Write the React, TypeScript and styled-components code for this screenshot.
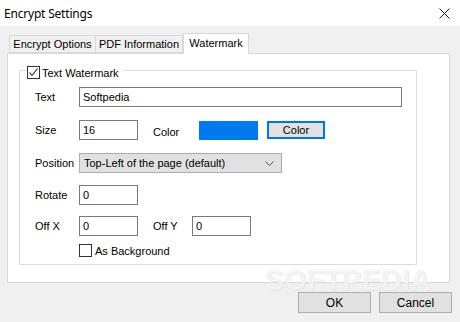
import React from "react";
import styled, { createGlobalStyle } from "styled-components";

const Global = createGlobalStyle`
  html, body { margin: 0; padding: 0; }
  body { width: 460px; height: 322px; overflow: hidden; background: #f0f0f0; }
  * { box-sizing: border-box; }
`;

const Dialog = styled.div`
  position: relative;
  width: 460px;
  height: 322px;
  display: flex;
  flex-direction: column;
  background: #f0f0f0;
  font-family: "Liberation Sans", Arial, sans-serif;
  font-size: 11px;
  color: #000;
`;

const TitleBar = styled.div`
  height: 26px;
  background: #fff;
  display: flex;
  align-items: center;
  justify-content: space-between;
  padding: 0 10px 0 4px;
`;

const Title = styled.span`
  font-family: "Noto Sans", "Open Sans", sans-serif;
  font-size: 12px;
  letter-spacing: -0.2px;
  color: #000;
`;

const Body = styled.div`
  flex: 1;
  display: flex;
  flex-direction: column;
  padding: 7px 10px 0 7px;
`;

const TabStrip = styled.div`
  display: flex;
  align-items: flex-end;
  height: 20px;
  padding-left: 2px;
`;

const Tab = styled.div<{ $active?: boolean; $first?: boolean; $w: number }>`
  height: ${(p) => (p.$active ? "21px" : "18px")};
  margin-bottom: ${(p) => (p.$active ? "-1px" : "0")};
  width: ${(p) => p.$w}px;
  border: 1px solid #d9d9d9;
  border-bottom: ${(p) => (p.$active ? "none" : "1px solid #d9d9d9")};
  border-left: ${(p) => (p.$first || p.$active ? "1px solid #d9d9d9" : "none")};
  background: ${(p) => (p.$active ? "#fff" : "#f0f0f0")};
  display: flex;
  align-items: center;
  justify-content: center;
  padding-bottom: ${(p) => (p.$active ? "3px" : "0")};
  position: relative;
  z-index: 1;
`;

const Panel = styled.div`
  height: 230px;
  background: #fff;
  border: 1px solid #d9d9d9;
  padding: 16px 0 0 11px;
`;

const Group = styled.div`
  position: relative;
  width: 398px;
  height: 195px;
  border: 1px solid #dcdcdc;
  padding: 0 0 0 15px;
  display: flex;
  flex-direction: column;
`;

const Legend = styled.label`
  position: absolute;
  top: -5px;
  left: 7px;
  background: #fff;
  display: flex;
  align-items: center;
  gap: 2px;
  padding-right: 4px;
  height: 13px;
`;

const CheckLine = styled.label`
  display: flex;
  align-items: center;
  gap: 3px;
  height: 13px;
`;

const Check = styled.span`
  width: 13px;
  height: 13px;
  border: 1px solid #333;
  background: #fff;
  display: inline-flex;
  align-items: center;
  justify-content: center;
`;

const Row = styled.div<{ $top: number; $h?: number }>`
  display: flex;
  align-items: center;
  margin-top: ${(p) => p.$top}px;
  height: ${(p) => p.$h ?? 20}px;
`;

const Label = styled.span<{ $w?: number; $dy?: number; $ml?: number }>`
  width: ${(p) => p.$w ?? 44}px;
  margin-left: ${(p) => p.$ml ?? 0}px;
  flex: none;
  position: relative;
  top: ${(p) => p.$dy ?? 0}px;
`;

const Input = styled.div<{ $w: number }>`
  width: ${(p) => p.$w}px;
  height: 20px;
  border: 1px solid #7a7a7a;
  background: #fff;
  padding: 0 3px;
  display: flex;
  align-items: center;
  flex: none;
`;

const Swatch = styled.div`
  width: 59px;
  height: 19px;
  background: #0078f0;
  flex: none;
`;

const ColorButton = styled.div`
  width: 58px;
  height: 18px;
  margin-left: 9px;
  border: 2px solid #0078d7;
  background: #e1e1e1;
  display: flex;
  align-items: center;
  justify-content: center;
  flex: none;
`;

const Select = styled.div`
  width: 203px;
  height: 20px;
  border: 1px solid #adadad;
  background: #e1e1e1;
  display: flex;
  align-items: center;
  justify-content: space-between;
  padding: 0 7px 0 4px;
  flex: none;
`;

const Footer = styled.div`
  display: flex;
  justify-content: flex-end;
  gap: 8px;
  margin-top: 9px;
  margin-right: -2px;
`;

const Button = styled.div`
  width: 73px;
  height: 21px;
  border: 1px solid #adadad;
  background: #e1e1e1;
  display: flex;
  align-items: center;
  justify-content: center;
  font-size: 12px;
`;

const Stamp = styled.div`
  position: absolute;
  left: 265px;
  top: 264px;
  font-family: "Liberation Sans", Arial, sans-serif;
  font-weight: bold;
  font-size: 29px;
  letter-spacing: 0px;
  color: rgba(255, 255, 255, 0.7);
  text-shadow: 0 0 1px rgba(190, 190, 190, 0.45), 1px 1px 0 rgba(215, 215, 215, 0.35);
  pointer-events: none;
`;

const CloseIcon = () => (
  <svg width="11" height="11" viewBox="0 0 11 11">
    <path d="M0.5 0.5 L10.5 10.5 M10.5 0.5 L0.5 10.5" stroke="#222" strokeWidth="1" fill="none" />
  </svg>
);

const Tick = () => (
  <svg width="11" height="11" viewBox="0 0 11 11">
    <path d="M1.5 5.5 L4 8.5 L9.5 1.5" stroke="#222" strokeWidth="1.1" fill="none" />
  </svg>
);

const Chevron = () => (
  <svg width="9" height="5" viewBox="0 0 9 5">
    <path d="M0.5 0.5 L4.5 4.5 L8.5 0.5" stroke="#555" strokeWidth="1" fill="none" />
  </svg>
);

export default function App() {
  return (
    <Dialog>
      <Global />
      <TitleBar>
        <Title>Encrypt Settings</Title>
        <CloseIcon />
      </TitleBar>
      <Body>
        <TabStrip>
          <Tab $w={87} $first>Encrypt Options</Tab>
          <Tab $w={87}>PDF Information</Tab>
          <Tab $w={66} $active>Watermark</Tab>
        </TabStrip>
        <Panel>
          <Group>
            <Legend>
              <Check><Tick /></Check>
              Text Watermark
            </Legend>
            <Row $top={16}>
              <Label>Text</Label>
              <Input $w={323}>Softpedia</Input>
            </Row>
            <Row $top={13}>
              <Label>Size</Label>
              <Input $w={59}>16</Input>
              <Label $w={46} $dy={2} $ml={15}>Color</Label>
              <Swatch />
              <ColorButton>Color</ColorButton>
            </Row>
            <Row $top={13}>
              <Label>Position</Label>
              <Select>
                <span>Top-Left of the page (default)</span>
                <Chevron />
              </Select>
            </Row>
            <Row $top={12}>
              <Label>Rotate</Label>
              <Input $w={59}>0</Input>
            </Row>
            <Row $top={11}>
              <Label>Off X</Label>
              <Input $w={59}>0</Input>
              <Label $w={39} $ml={15}>Off Y</Label>
              <Input $w={59}>0</Input>
            </Row>
            <Row $top={8} $h={13}>
              <Label />
              <CheckLine>
                <Check />
                As Background
              </CheckLine>
            </Row>
          </Group>
        </Panel>
        <Footer>
          <Button>OK</Button>
          <Button>Cancel</Button>
        </Footer>
      </Body>
      <Stamp>SOFTPEDIA</Stamp>
    </Dialog>
  );
}
